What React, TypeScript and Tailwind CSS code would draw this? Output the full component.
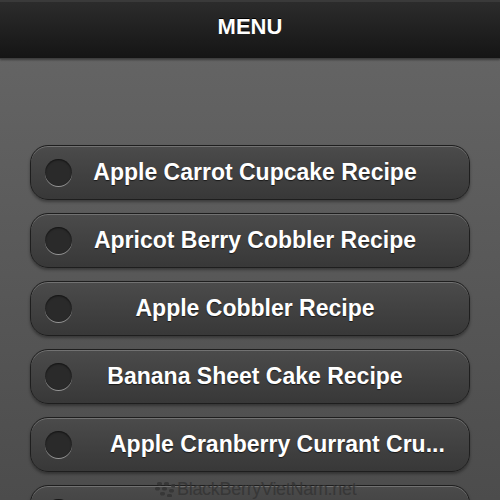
import React from "react";

const items: { t: string; cls: string }[] = [
  { t: "Apple Carrot Cupcake Recipe", cls: "text-center" },
  { t: "Apricot Berry Cobbler Recipe", cls: "text-center" },
  { t: "Apple Cobbler Recipe", cls: "text-center" },
  { t: "Banana Sheet Cake Recipe", cls: "text-center" },
  { t: "Apple Cranberry Currant Cru...", cls: "text-left pl-[38px]" },
  { t: "", cls: "text-center" },
];

function BBLogo() {
  const dots = [
    [2, 1], [9, 1], [16, 3],
    [0, 6], [7, 6], [14, 8],
    [5, 11], [12, 13],
  ];
  return (
    <svg width="20" height="16" viewBox="0 0 20 16">
      {dots.map(([x, y], i) => (
        <rect key={i} x={x} y={y} width="5" height="3.4" rx="1.6" fill="#333" />
      ))}
    </svg>
  );
}

export default function App() {
  return (
    <div
      className="relative w-[500px] h-[500px] overflow-hidden bg-gradient-to-b from-[#676767] to-[#4c4c4c]"
      style={{ fontFamily: '"Liberation Sans", Arial, sans-serif' }}
    >
      <div className="h-[59px] border-t-2 border-[#3a3a3a] border-b border-b-[#3e3e3e] bg-gradient-to-b from-[#2c2c2c] to-[#151515] flex items-center justify-center shadow-[0_1px_2px_rgba(0,0,0,0.4)]">
        <span className="text-white font-bold text-[22px] mb-[8px] [text-shadow:0_-1px_0_#000]">MENU</span>
      </div>
      <div className="flex flex-col gap-[13px] pt-[86px] px-[30px]">
        {items.map((it, i) => (
          <div
            key={i}
            className="h-[55px] shrink-0 rounded-[18px] border border-[#1e1e1e] bg-gradient-to-b from-[#4b4b4b] to-[#383838] shadow-[inset_0_1px_0_rgba(255,255,255,0.22),0_2px_3px_rgba(0,0,0,0.35)] flex items-center pl-[14px] pr-[31px]"
          >
            <div className="w-[27px] h-[27px] shrink-0 rounded-full bg-[#2a2a2a] shadow-[inset_0_1px_2px_rgba(0,0,0,0.6),0_1px_0_rgba(255,255,255,0.45)]" />
            <div
              className={`flex-1 min-w-0 text-white font-bold text-[23px] whitespace-nowrap [text-shadow:0_1px_1px_rgba(0,0,0,0.6)] ${it.cls}`}
            >
              {it.t}
            </div>
          </div>
        ))}
      </div>
      <div className="absolute left-[155px] top-[480px] flex items-center gap-[2px] opacity-80">
        <BBLogo />
        <span className="text-[18px] text-[#333] tracking-[-0.3px] leading-none">BlackBerryVietNam.net</span>
      </div>
    </div>
  );
}
